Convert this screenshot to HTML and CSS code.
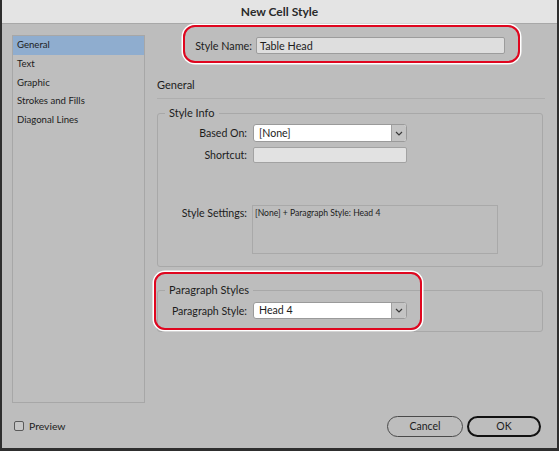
FILE: index.html
```html
<!DOCTYPE html>
<html>
<head>
<meta charset="utf-8">
<title>New Cell Style</title>
<link rel="stylesheet" href="styles.css">
</head>
<body>
<div class="window">
  <div class="titlebar">New Cell Style</div>
  <div class="content">
    <ul class="sidebar">
      <li class="item selected">General</li>
      <li class="item">Text</li>
      <li class="item">Graphic</li>
      <li class="item">Strokes and Fills</li>
      <li class="item">Diagonal Lines</li>
    </ul>
    <div class="main">
      <div class="name-row">
        <span class="name-label">Style Name:</span>
        <div class="name-input">Table Head</div>
        <div class="highlight hl-name"></div>
      </div>
      <div class="section-title">General</div>
      <div class="separator"></div>
      <fieldset class="group group-info">
        <legend class="legend">Style Info</legend>
        <div class="frow">
          <span class="flabel">Based On:</span>
          <div class="select">
            <span class="select-value">[None]</span>
            <span class="select-btn"><svg width="8" height="5" viewBox="0 0 8 5"><polyline points="1,1 4,4 7,1" fill="none" stroke="#3a3a3a" stroke-width="1.2"/></svg></span>
          </div>
        </div>
        <div class="frow row-shortcut">
          <span class="flabel">Shortcut:</span>
          <div class="shortcut"></div>
        </div>
        <div class="frow row-settings">
          <span class="flabel settings-label">Style Settings:</span>
          <div class="settings-box">[None] + Paragraph Style: Head 4</div>
        </div>
      </fieldset>
      <div class="para-wrap">
        <fieldset class="group group-para">
          <legend class="legend">Paragraph Styles</legend>
          <div class="frow">
            <span class="flabel">Paragraph Style:</span>
            <div class="select select-para">
              <span class="select-value">Head 4</span>
              <span class="select-btn"><svg width="8" height="5" viewBox="0 0 8 5"><polyline points="1,1 4,4 7,1" fill="none" stroke="#3a3a3a" stroke-width="1.2"/></svg></span>
            </div>
          </div>
        </fieldset>
        <div class="highlight hl-para"></div>
      </div>
    </div>
  </div>
  <div class="footer">
    <label class="preview"><span class="checkbox"></span>Preview</label>
    <div class="buttons">
      <div class="btn">Cancel</div>
      <div class="btn btn-ok">OK</div>
    </div>
  </div>
</div>
</body>
</html>
```

FILE: styles.css
```css
* { box-sizing: border-box; }
html, body { margin: 0; padding: 0; }
body {
  width: 559px;
  height: 451px;
  overflow: hidden;
  font-family: "Lato", "Liberation Sans", sans-serif;
  font-size: 10.6px;
  color: #1c1c1c;
  background: #bdbdbd;
}
.window {
  width: 559px;
  height: 451px;
  display: flex;
  flex-direction: column;
  background: #bdbdbd;
  border-left: 2px solid #2e2e2e;
  border-right: 2px solid #2e2e2e;
  border-bottom: 3px solid #2e2e2e;
}
.titlebar {
  height: 24px;
  flex: none;
  background: #e4e4e4;
  border-bottom: 1px solid #a8a8a8;
  text-align: center;
  font-weight: 700;
  font-size: 12px;
  line-height: 23px;
  color: #2a2a2a;
}
.content {
  flex: 1;
  display: flex;
  padding-left: 10px;
}
.sidebar {
  list-style: none;
  margin: 11px 0 0 0;
  padding: 0;
  width: 133px;
  height: 368px;
  border: 1px solid #a7a7a7;
  background: #bebebe;
}
.item {
  height: 18.75px;
  line-height: 18.75px;
  padding-left: 4px;
  font-size: 9.6px;
}
.item.selected { background: #8fadcf; }
.main {
  margin-left: 12px;
  width: 388px;
  padding-top: 13px;
  display: flex;
  flex-direction: column;
}
.name-row {
  position: relative;
  display: flex;
  align-items: center;
  height: 17px;
}
.name-label {
  width: 95px;
  text-align: right;
  margin-right: 4px;
  font-size: 10.8px;
}
.name-input {
  width: 249px;
  height: 17px;
  background: #dedede;
  border: 1px solid #9c9c9c;
  border-radius: 2px;
  padding-left: 3px;
  line-height: 15px;
  font-size: 10.8px;
}
.highlight {
  position: absolute;
  border: 2.5px solid #e0061f;
  box-shadow: 0 0 0 1.5px #ffffff;
  border-radius: 12px;
  pointer-events: none;
}
.hl-name { left: 26px; top: -12px; width: 337px; height: 38px; }
.section-title {
  margin-top: 24px;
  height: 14px;
  line-height: 14px;
  font-size: 11px;
}
.separator {
  margin-top: 6px;
  height: 1px;
  background: #aeaeae;
  width: 388px;
}
.group {
  margin: 7px 0 0 0;
  padding: 0 0 12px 0;
  width: 386px;
  border: 1px solid #a8a8a8;
  border-radius: 3px;
  min-width: 0;
}
.legend {
  margin-left: 7px;
  padding: 0 4px;
  height: 14px;
  line-height: 14px;
  font-size: 11px;
}
.frow {
  display: flex;
  align-items: center;
}
.group-info .frow:first-of-type { margin-top: 4px; }
.flabel {
  width: 89px;
  margin-right: 6px;
  text-align: right;
  white-space: nowrap;
}
.select {
  width: 154px;
  height: 18px;
  display: flex;
  background: #ffffff;
  border: 1px solid #9a9a9a;
  border-radius: 3px;
  overflow: hidden;
}
.select-value {
  flex: 1;
  padding-left: 5px;
  line-height: 16px;
}
.select-btn {
  width: 15px;
  flex: none;
  background: #c4c4c4;
  border-left: 1px solid #a0a0a0;
  display: flex;
  align-items: center;
  justify-content: center;
}
.row-shortcut { margin-top: 5px; }
.shortcut {
  width: 154px;
  height: 16px;
  background: #e2e2e2;
  border: 1px solid #a2a2a2;
  border-radius: 2px;
}
.row-settings { margin-top: 42px; align-items: flex-start; }
.settings-label { padding-top: 2px; margin-right: 5px; }
.settings-box {
  width: 246px;
  height: 49px;
  border: 1px solid #a9a9a9;
  font-size: 8.6px;
  padding: 1px 0 0 2px;
  line-height: 12px;
}
.para-wrap {
  position: relative;
  margin-top: 16px;
}
.group-para { margin-top: 0; }
.group-para .frow { margin-top: 5px; }
.select-para { height: 17px; }
.select-para .select-value { line-height: 15px; }
.hl-para { left: -3px; top: -11px; width: 268px; height: 58px; border-radius: 11px; }
.footer {
  height: 45px;
  flex: none;
  display: flex;
  align-items: center;
  justify-content: space-between;
  padding: 0 16px 0 12px;
}
.preview {
  display: flex;
  align-items: center;
  font-size: 10.4px;
}
.checkbox {
  width: 10px;
  height: 10px;
  border: 1px solid #5a5a5a;
  border-radius: 2px;
  background: #c6c6c6;
  margin-right: 5px;
}
.buttons {
  display: flex;
  gap: 4px;
  margin-top: 2px;
}
.btn {
  width: 76px;
  height: 21px;
  border: 1px solid #4a4a4a;
  border-radius: 11px;
  text-align: center;
  line-height: 19px;
  font-size: 10.5px;
}
.btn-ok {
  width: 74px;
  border: 2px solid #111111;
  line-height: 17px;
}
```
